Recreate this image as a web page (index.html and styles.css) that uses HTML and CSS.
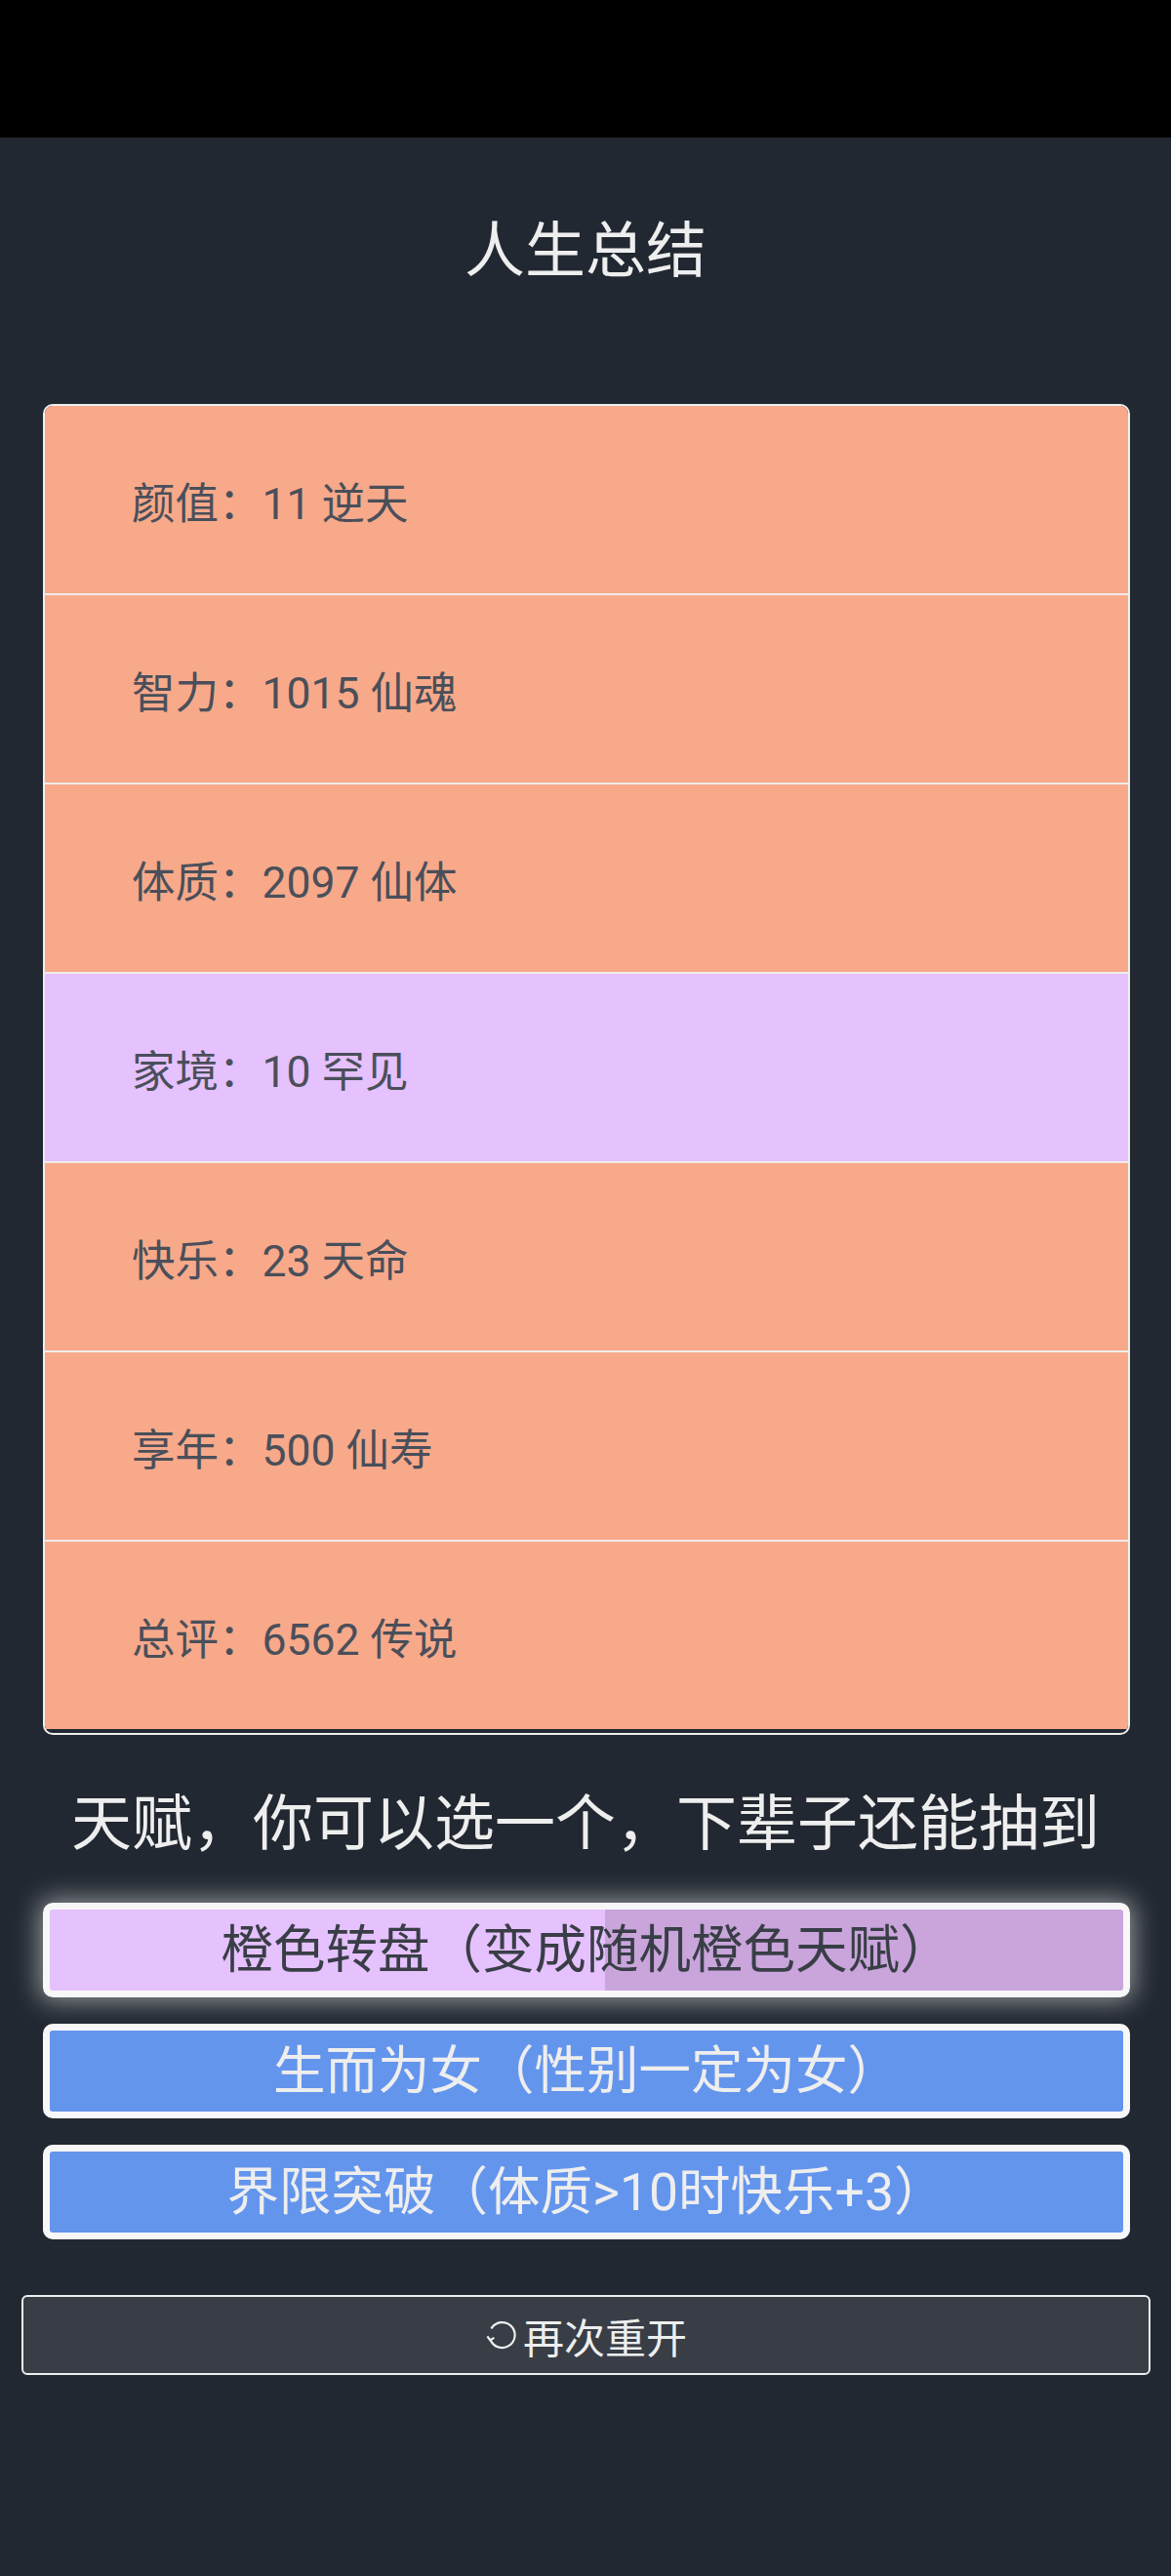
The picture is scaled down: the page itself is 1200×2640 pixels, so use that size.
FILE: index.html
```html
<!DOCTYPE html>
<html lang="zh-CN">
<head>
  <meta charset="UTF-8">
  <title>人生总结</title>
  <link rel="stylesheet" href="styles.css">
</head>
<body>
  <div class="status-bar"></div>

  <div class="page">
    <h1 class="title">人生总结</h1>

    <ul class="summary">
      <li class="grade3">颜值：11 逆天</li>
      <li class="grade3">智力：1015 仙魂</li>
      <li class="grade3">体质：2097 仙体</li>
      <li class="grade2">家境：10 罕见</li>
      <li class="grade3">快乐：23 天命</li>
      <li class="grade3">享年：500 仙寿</li>
      <li class="grade3">总评：6562 传说</li>
    </ul>

    <h2 class="subtitle">天赋，你可以选一个，下辈子还能抽到</h2>

    <ul class="talents">
      <li class="talent grade2 selected">橙色转盘（变成随机橙色天赋）</li>
      <li class="talent grade1">生而为女（性别一定为女）</li>
      <li class="talent grade1">界限突破（体质&gt;10时快乐+3）</li>
    </ul>

    <button class="restart">
      <svg class="restart-icon" viewBox="0 0 36 36" width="36" height="36">
        <path d="M6.4 11.5 A13 13 0 1 1 5.4 22.5" fill="none" stroke="#eeeeee" stroke-width="2.2"/>
        <path d="M2.4 19.4 L5.3 23.2 L9.4 20.9" fill="none" stroke="#eeeeee" stroke-width="2.2"/>
      </svg>再次重开
    </button>
  </div>
</body>
</html>
```

FILE: styles.css
```css
body {
  margin: 0;
  padding: 0;
  background-color: #222831;
  color: #eeeeee;
  font-family: Roboto, "Noto Sans CJK SC", sans-serif;
}

.status-bar {
  height: 141px;
  background-color: #000;
}

.page {
  padding: 80px 0 120px;
}

.title {
  margin: 0 0 119px;
  font-size: 62px;
  font-weight: normal;
  line-height: 74px;
  text-align: center;
}

.summary {
  list-style: none;
  margin: 0 42px 0 44px;
  padding: 0 0 4px;
  border: 2px solid #eeeeee;
  border-radius: 10px;
  overflow: hidden;
}

.summary li {
  display: flex;
  align-items: center;
  height: 192px;
  padding-left: 89px;
  font-size: 44.5px;
  color: #4a4f5a;
}

.summary li + li {
  border-top: 2px solid #f0ece8;
}

.grade1 {
  background-color: #6495ed;
}

.grade2 {
  background-color: #e5c1fe;
}

.grade3 {
  background-color: #f7a98a;
}

.subtitle {
  margin: 55px 0 43px;
  font-size: 62px;
  font-weight: normal;
  line-height: 74px;
  text-align: center;
}

.talents {
  list-style: none;
  margin: 0 42px 0 44px;
  padding: 0;
  display: flex;
  flex-direction: column;
  gap: 27px;
}

.talent {
  height: 83px;
  border: 7px solid #f7f7f8;
  border-radius: 10px;
  font-size: 53.5px;
  line-height: 83px;
  text-align: center;
  color: #eeeeee;
}

.talent.grade2 {
  color: #393e46;
  /* right part darker, like the reference */
  background: linear-gradient(to right, #e5c1fe 569px, #c9a5dc 569px);
}

.talent.selected {
  box-shadow: 0 0 26px 4px rgba(255, 255, 255, 0.5);
}

.restart {
  display: flex;
  align-items: center;
  justify-content: center;
  box-sizing: border-box;
  width: calc(100% - 43px);
  height: 82px;
  margin: 57px 21px 0 22px;
  padding: 0;
  background-color: #393e46;
  border: 2px solid #eeeeee;
  border-radius: 6px;
  color: #eeeeee;
  font-family: Roboto, "Noto Sans CJK SC", sans-serif;
  font-size: 42px;
}

.restart-icon {
  width: 36px;
  height: 36px;
  margin-right: 3px;
}
```
